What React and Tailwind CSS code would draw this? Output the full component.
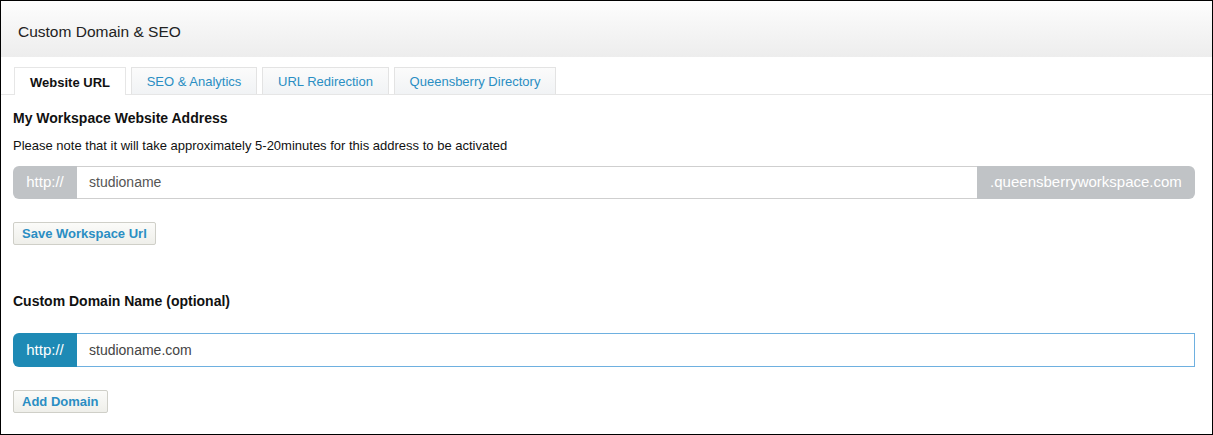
const tabs = [
  { label: 'Website URL', width: 'w-[112px]', active: true },
  { label: 'SEO & Analytics', width: 'w-[126px]' },
  { label: 'URL Redirection', width: 'w-[127px]' },
  { label: 'Queensberry Directory', width: 'w-[162px]' },
];

function App() {
  return (
    <div
      className="w-[1213px] h-[435px] border border-black bg-white flex flex-col overflow-hidden"
      style={{ fontFamily: '"Liberation Sans", Arial, sans-serif' }}
    >
      {/* header */}
      <div className="h-[56px] shrink-0 bg-gradient-to-b from-[#fdfdfd] to-[#ededed] flex items-center pl-[17px] pt-[5px]">
        <h1 className="text-[15.5px] text-[#222]">Custom Domain &amp; SEO</h1>
      </div>

      {/* tabs */}
      <div className="flex gap-[5px] pl-[13px] pt-[10px] border-b border-[#e6e6e6]">
        {tabs.map((tab) => (
          <div
            key={tab.label}
            className={`${tab.width} h-[27px] flex items-center justify-center pt-[2px] text-[13px] border border-b-0 -mb-px
              ${tab.active
                ? 'bg-white border-[#e6e6e6] font-bold text-[#111] h-[28px]'
                : 'bg-gradient-to-b from-[#fbfbfb] to-[#f1f3f5] border-[#e3e3e3] text-[#2a8ec3]'}`}
          >
            {tab.label}
          </div>
        ))}
      </div>

      {/* content */}
      <div className="pl-[12px] pr-[16px]">
        <h2 className="mt-[15px] text-[14px] font-bold text-[#111] leading-[16px]">My Workspace Website Address</h2>
        <p className="mt-[12px] text-[13px] text-[#111] leading-[15px]">
          Please note that it will take approximately 5-20minutes for this address to be activated
        </p>

        <div className="mt-[13px] w-[1182px] h-[33px] flex text-[14px]">
          <div className="w-[64px] rounded-l-[6px] bg-[#c0c3c6] text-white text-[15px] flex items-center justify-center">http://</div>
          <div className="flex-1 border-y border-[#cfcfcf] flex items-center pl-[12px] text-[#555]">studioname</div>
          <div className="w-[218px] rounded-r-[6px] bg-[#c0c3c6] text-white text-[15px] flex items-center justify-center">.queensberryworkspace.com</div>
        </div>

        <button className="mt-[23px] h-[23px] px-[8px] rounded-[2px] border border-[#cfcfc8] bg-gradient-to-b from-[#fbfbf9] to-[#efefea] text-[13px] font-bold text-[#2a8ec3]">
          Save Workspace Url
        </button>

        <h2 className="mt-[48px] text-[14px] font-bold text-[#111] leading-[16px]">Custom Domain Name (optional)</h2>

        <div className="mt-[24px] w-[1182px] h-[34px] flex text-[14px]">
          <div className="w-[64px] rounded-l-[6px] bg-[#1e8ab5] text-white text-[15px] flex items-center justify-center">http://</div>
          <div className="flex-1 border border-l-0 border-[#6eb0e0] flex items-center pl-[12px] text-[#444]">studioname.com</div>
        </div>

        <button className="mt-[23px] h-[23px] px-[8px] rounded-[2px] border border-[#cfcfc8] bg-gradient-to-b from-[#fbfbf9] to-[#efefea] text-[13px] font-bold text-[#2a8ec3]">
          Add Domain
        </button>
      </div>
    </div>
  );
}

export default App;
